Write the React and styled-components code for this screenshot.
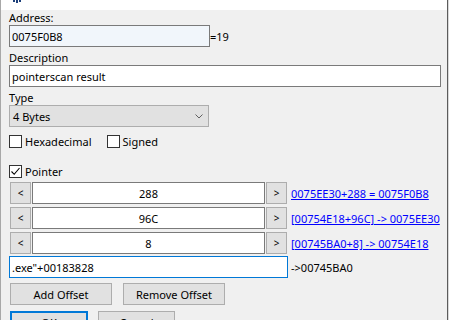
import React from "react";
import styled, { createGlobalStyle } from "styled-components";

const Global = createGlobalStyle`
  html, body { margin: 0; padding: 0; background: #d9d9d9; }
  body { font-family: "Noto Sans", "Open Sans", sans-serif; font-size: 11px; color: #000; }
  * { box-sizing: border-box; }
`;

const Window = styled.div`
  width: 448px;
  height: 320px;
  overflow: hidden;
  display: flex;
  flex-direction: column;
  border-left: 1px solid #a8a8a8;
  border-right: 1px solid #5c5c5c;
`;

const TitleBar = styled.div`
  height: 10px;
  flex: none;
  background: #fff;
  display: flex;
  align-items: flex-start;
  padding-left: 12px;
`;

const Client = styled.div`
  flex: 1;
  background: #f0f0f0;
  padding: 0 6px 0 8px;
  display: flex;
  flex-direction: column;
`;

const Label = styled.div`
  height: 15px;
  line-height: 15px;
  margin-top: ${(p) => p.$mt || 0}px;
  white-space: nowrap;
`;

const Row = styled.div`
  display: flex;
  align-items: center;
  height: ${(p) => p.$h || 22}px;
  margin-top: ${(p) => p.$mt || 0}px;
  gap: ${(p) => p.$gap || 0}px;
  padding-left: ${(p) => p.$pl || 0}px;
  flex: none;
`;

const TextBox = styled.div`
  height: 22px;
  width: ${(p) => (p.$w ? `${p.$w}px` : "auto")};
  flex: ${(p) => (p.$w ? "none" : "1")};
  border: 1px solid ${(p) => (p.$focus ? "#0078d7" : "#7a7a7a")};
  background: ${(p) => p.$bg || "#fff"};
  display: flex;
  align-items: center;
  justify-content: ${(p) => (p.$center ? "center" : "flex-start")};
  padding: 0 2px;
  white-space: nowrap;
  overflow: hidden;
`;

const Side = styled.span`
  white-space: nowrap;
  margin-left: ${(p) => p.$ml || 0}px;
`;

const Select = styled.div`
  width: 200px;
  height: 22px;
  background: #e1e1e1;
  border: 1px solid #adadad;
  display: flex;
  align-items: center;
  justify-content: space-between;
  padding: 0 5px 0 3px;
`;

const CheckItem = styled.label`
  display: flex;
  align-items: center;
  gap: 3px;
  margin-right: ${(p) => p.$mr || 0}px;
`;

const Box = styled.span`
  width: 13px;
  height: 13px;
  border: 1px solid #333;
  background: #fff;
  display: flex;
  align-items: center;
  justify-content: center;
`;

const SmallBtn = styled.div`
  width: 21px;
  height: 22px;
  flex: none;
  background: #e1e1e1;
  border: 1px solid #adadad;
  display: flex;
  align-items: center;
  justify-content: center;
  font-size: 10px;
`;

const Link = styled.span`
  color: #0000ff;
  text-decoration: underline;
  white-space: nowrap;
  margin-left: 3px;
`;

const Button = styled.div`
  width: ${(p) => p.$w}px;
  height: 22px;
  flex: none;
  background: #e1e1e1;
  border: ${(p) => (p.$default ? "2px solid #0078d7" : "1px solid #adadad")};
  display: flex;
  align-items: center;
  justify-content: center;
  white-space: nowrap;
`;

const offsets = [
  { v: "288", link: "0075EE30+288 = 0075F0B8" },
  { v: "96C", link: "[00754E18+96C] -> 0075EE30" },
  { v: "8", link: "[00745BA0+8] -> 00754E18" },
];

const Check = () => (
  <svg width="11" height="11" viewBox="0 0 11 11">
    <path d="M1.5 5.5 L4.2 8.3 L9.5 2" fill="none" stroke="#000" strokeWidth="1.1" />
  </svg>
);

export default function App() {
  return (
    <>
      <Global />
      <Window>
        <TitleBar>
          <svg width="8" height="3" viewBox="0 0 8 3">
            <rect x="0" y="0" width="2" height="2" fill="#1c3f7a" />
            <rect x="3" y="0" width="2" height="3" fill="#1c3f7a" />
            <rect x="6" y="0" width="2" height="2" fill="#1c3f7a" />
          </svg>
        </TitleBar>
        <Client>
          <Label>Address:</Label>
          <Row>
            <TextBox $w={201} $bg="#f1f6fb">0075F0B8</TextBox>
            <Side>=19</Side>
          </Row>
          <Label $mt={3}>Description</Label>
          <Row>
            <TextBox>pointerscan result</TextBox>
          </Row>
          <Label $mt={3}>Type</Label>
          <Row>
            <Select>
              <span>4 Bytes</span>
              <svg width="8" height="5" viewBox="0 0 8 5">
                <path d="M0.5 0.5 L4 4 L7.5 0.5" fill="none" stroke="#606060" strokeWidth="1" />
              </svg>
            </Select>
          </Row>
          <Row $h={17} $mt={6}>
            <CheckItem $mr={15}>
              <Box />
              <span>Hexadecimal</span>
            </CheckItem>
            <CheckItem>
              <Box />
              <span>Signed</span>
            </CheckItem>
          </Row>
          <Row $h={17} $mt={13}>
            <CheckItem>
              <Box>
                <Check />
              </Box>
              <span>Pointer</span>
            </CheckItem>
          </Row>
          {offsets.map((o, i) => (
            <Row key={i} $mt={i === 0 ? 2 : 3} $pl={1} $gap={1}>
              <SmallBtn>&lt;</SmallBtn>
              <TextBox $w={233} $center>
                {o.v}
              </TextBox>
              <SmallBtn>&gt;</SmallBtn>
              <Link>{o.link}</Link>
            </Row>
          ))}
          <Row $mt={2}>
            <TextBox $w={279} $focus>
              .exe"+00183828
            </TextBox>
            <Side $ml={3}>-&gt;00745BA0</Side>
          </Row>
          <Row $mt={5} $pl={1} $gap={11}>
            <Button $w={102}>Add Offset</Button>
            <Button $w={102}>Remove Offset</Button>
          </Row>
          <Row $mt={6} $pl={1} $gap={10}>
            <Button $w={78} $default>
              OK
            </Button>
            <Button $w={77}>Cancel</Button>
          </Row>
        </Client>
      </Window>
    </>
  );
}
